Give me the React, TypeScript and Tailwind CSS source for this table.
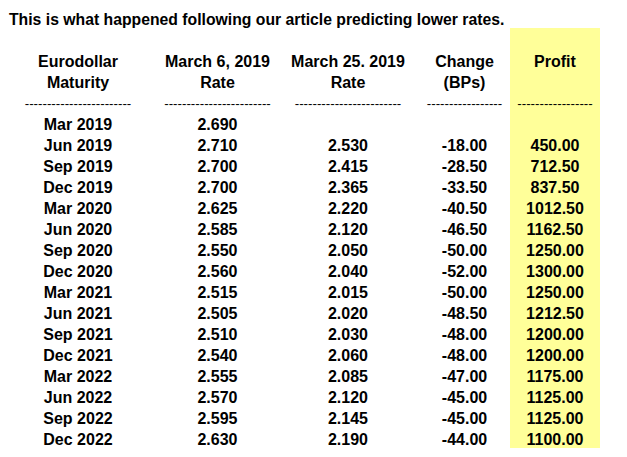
import React from 'react';

type Row = {
  maturity: string;
  rate1: string;
  rate2: string;
  change: string;
  profit: string;
};

const rows: Row[] = [
  { maturity: 'Mar 2019', rate1: '2.690', rate2: '', change: '', profit: '' },
  { maturity: 'Jun 2019', rate1: '2.710', rate2: '2.530', change: '-18.00', profit: '450.00' },
  { maturity: 'Sep 2019', rate1: '2.700', rate2: '2.415', change: '-28.50', profit: '712.50' },
  { maturity: 'Dec 2019', rate1: '2.700', rate2: '2.365', change: '-33.50', profit: '837.50' },
  { maturity: 'Mar 2020', rate1: '2.625', rate2: '2.220', change: '-40.50', profit: '1012.50' },
  { maturity: 'Jun 2020', rate1: '2.585', rate2: '2.120', change: '-46.50', profit: '1162.50' },
  { maturity: 'Sep 2020', rate1: '2.550', rate2: '2.050', change: '-50.00', profit: '1250.00' },
  { maturity: 'Dec 2020', rate1: '2.560', rate2: '2.040', change: '-52.00', profit: '1300.00' },
  { maturity: 'Mar 2021', rate1: '2.515', rate2: '2.015', change: '-50.00', profit: '1250.00' },
  { maturity: 'Jun 2021', rate1: '2.505', rate2: '2.020', change: '-48.50', profit: '1212.50' },
  { maturity: 'Sep 2021', rate1: '2.510', rate2: '2.030', change: '-48.00', profit: '1200.00' },
  { maturity: 'Dec 2021', rate1: '2.540', rate2: '2.060', change: '-48.00', profit: '1200.00' },
  { maturity: 'Mar 2022', rate1: '2.555', rate2: '2.085', change: '-47.00', profit: '1175.00' },
  { maturity: 'Jun 2022', rate1: '2.570', rate2: '2.120', change: '-45.00', profit: '1125.00' },
  { maturity: 'Sep 2022', rate1: '2.595', rate2: '2.145', change: '-45.00', profit: '1125.00' },
  { maturity: 'Dec 2022', rate1: '2.630', rate2: '2.190', change: '-44.00', profit: '1100.00' },
];

const longDash = '-'.repeat(24);
const shortDash = '-'.repeat(17);

// one sheet line: five cells at fixed widths, the last one on yellow
const Line: React.FC<{ cells: React.ReactNode[] }> = ({ cells }) => (
  <div className="flex h-[21px] items-stretch">
    <div className="flex w-[140px] items-center justify-center pt-[4px]">{cells[0]}</div>
    <div className="flex w-[139px] items-center justify-center pt-[4px]">{cells[1]}</div>
    <div className="flex w-[132px] items-center justify-center pt-[4px] pr-[10px]">{cells[2]}</div>
    <div className="flex w-[91px] items-center justify-center pt-[4px]">{cells[3]}</div>
    <div className="flex w-[90px] items-center justify-center bg-[#ffff99] pt-[4px]">{cells[4]}</div>
  </div>
);

const Dashes: React.FC<{ text: string }> = ({ text }) => (
  <span className="text-[13.33px] font-normal leading-none">{text}</span>
);

export default function App() {
  return (
    <div className="min-h-[457px] w-[627px] bg-white pt-[7px] pl-[8px] font-['Liberation_Sans',Arial,sans-serif] text-[16px] font-bold leading-none text-black">
      <div className="flex h-[21px] items-center pt-[4px] pl-[1px] text-[15.75px]">
        This is what happened following our article predicting lower rates.
      </div>

      <Line cells={['', '', '', '', '']} />
      <Line cells={['Eurodollar', 'March 6, 2019', 'March 25. 2019', 'Change', 'Profit']} />
      <Line cells={['Maturity', 'Rate', 'Rate', '(BPs)', '']} />
      <Line
        cells={[
          <Dashes text={longDash} />,
          <Dashes text={longDash} />,
          <Dashes text={longDash} />,
          <Dashes text={shortDash} />,
          <Dashes text={shortDash} />,
        ]}
      />
      {rows.map((r) => (
        <Line key={r.maturity} cells={[r.maturity, r.rate1, r.rate2, r.change, r.profit]} />
      ))}
    </div>
  );
}
